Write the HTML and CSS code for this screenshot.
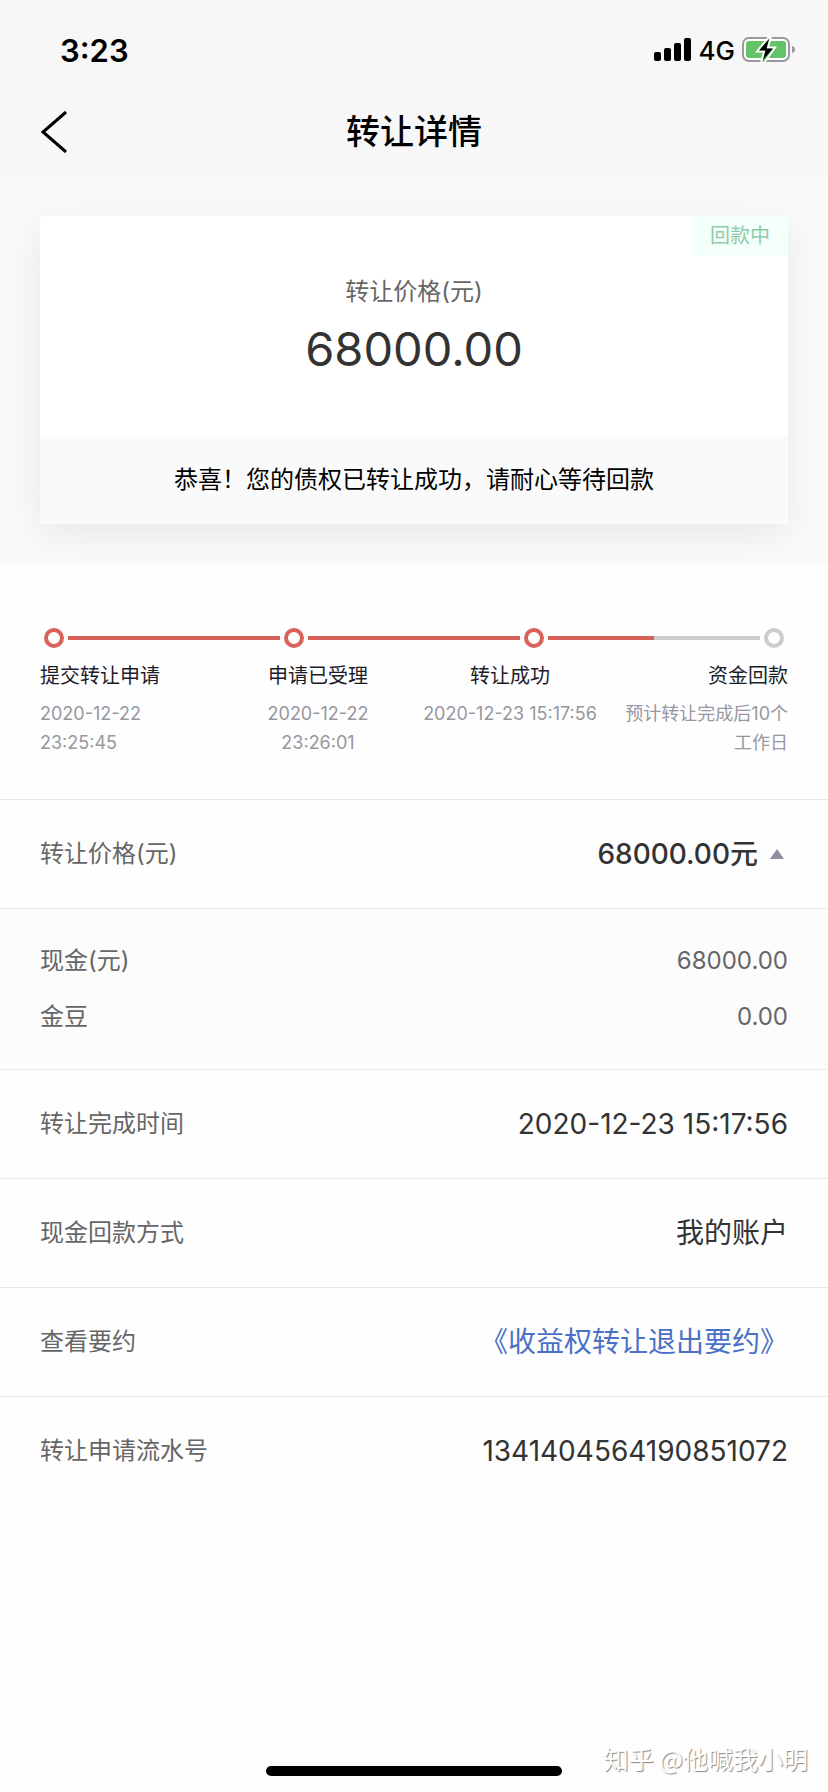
FILE: index.html
```html
<!DOCTYPE html>
<html lang="zh-CN">
  <head>
    <meta charset="UTF-8" />
    <meta name="viewport" content="width=device-width, initial-scale=1.0" />
    <title>转让详情</title>
    <link rel="stylesheet" href="styles.css">
  </head>
  <body>
    <header class="header">
      <div class="status">
        <div class="time">3:23</div>
        <div class="statusIcons">
          <svg class="signal" width="38" height="24" viewBox="0 0 38 24">
            <rect x="0" y="14" width="7" height="9" rx="2" />
            <rect x="10" y="10" width="7" height="13" rx="2" />
            <rect x="20" y="5" width="7" height="18" rx="2" />
            <rect x="30" y="0" width="7" height="23" rx="2" />
          </svg>
          <span class="network">4G</span>
          <svg class="battery" width="54" height="26" viewBox="0 0 54 26">
            <rect x="1" y="1" width="46" height="23" rx="6" fill="#fff" stroke="#9a989c" stroke-width="2" />
            <rect x="4" y="4" width="40" height="17" rx="3" fill="#62c466" />
            <path d="M50 9 Q53 10 53 12.500 Q53 15 50 16 Z" fill="#9a989c" />
            <path d="M27 0 L15 14.500 H22 L19 26 H22 L33 10.500 H26 L29 0 Z" fill="#62c466" stroke="#fff" stroke-width="2" />
            <path d="M27 2 L17 13.500 H23.500 L21 23 L31 11.500 H24.500 Z" fill="#000" />
          </svg>
        </div>
      </div>
      <div class="nav">
        <button class="back" type="button" aria-label="返回">
          <svg width="26" height="42" viewBox="0 0 26 42">
            <path d="M25 1 L2 21 L25 41" fill="none" stroke="#000" stroke-width="3" />
          </svg>
        </button>
        <h1 class="title">转让详情</h1>
      </div>
    </header>

    <main>
      <section class="hero">
        <div class="card">
          <span class="badge">回款中</span>
          <div class="cardTop">
            <div class="cardLabel">转让价格(元)</div>
            <div class="cardPrice">68000.00</div>
          </div>
          <div class="cardMsg">恭喜！您的债权已转让成功，请耐心等待回款</div>
        </div>
      </section>

      <section class="steps">
        <div class="track">
          <span class="dot"></span>
          <span class="line"></span>
          <span class="dot"></span>
          <span class="line"></span>
          <span class="dot"></span>
          <span class="line lineHalf"></span>
          <span class="dot dotOff"></span>
        </div>
        <ol class="stepList">
          <li>
            <div class="stepName">提交转让申请</div>
            <div class="stepDate">2020-12-22<br />23:25:45</div>
          </li>
          <li>
            <div class="stepName">申请已受理</div>
            <div class="stepDate">2020-12-22<br />23:26:01</div>
          </li>
          <li>
            <div class="stepName">转让成功</div>
            <div class="stepDate">2020-12-23 15:17:56</div>
          </li>
          <li>
            <div class="stepName">资金回款</div>
            <div class="stepDate">预计转让完成后10个<br />工作日</div>
          </li>
        </ol>
      </section>

      <section class="list">
        <div class="row">
          <span class="label">转让价格(元)</span>
          <button class="value amount" type="button" aria-expanded="true">
            68000.00元
            <svg width="14" height="10" viewBox="0 0 14 10">
              <path d="M7 0 L14 10 H0 Z" fill="#8f8f9f" />
            </svg>
          </button>
        </div>
        <div class="detail">
          <div class="detailRow"><span>现金(元)</span><span>68000.00</span></div>
          <div class="detailRow"><span>金豆</span><span>0.00</span></div>
        </div>
        <div class="row">
          <span class="label">转让完成时间</span>
          <span class="value">2020-12-23 15:17:56</span>
        </div>
        <div class="row">
          <span class="label">现金回款方式</span>
          <span class="value">我的账户</span>
        </div>
        <div class="row">
          <span class="label">查看要约</span>
          <a class="value link" href="#">《收益权转让退出要约》</a>
        </div>
        <div class="row">
          <span class="label">转让申请流水号</span>
          <span class="value">1341404564190851072</span>
        </div>
      </section>
    </main>

    <div class="homeBar"></div>
    <div class="watermark">知乎 @他喊我小明</div>
  </body>
</html>
```
FILE: styles.css
```css
* {
  box-sizing: border-box;
}
body {
  display: flex;
  flex-direction: column;
  position: relative;
  min-height: 100vh;
  margin: 0;
  background-color: #fefefe;
  color: #333;
  font-family: Inter, "Noto Sans CJK SC", sans-serif;
}
button {
  border: none;
  background: none;
  padding: 0;
  font-family: inherit;
}

/* header */
.header {
  background-color: #f7f7f7;
  color: #000;
}
.status {
  display: flex;
  align-items: center;
  justify-content: space-between;
  height: 88px;
  padding: 12px 32px 0 60px;
}
.time {
  font-size: 31px;
  font-weight: 600;
}
.statusIcons {
  display: flex;
  align-items: center;
  gap: 7px;
}
.network {
  font-size: 26px;
  font-weight: 500;
}
.nav {
  display: grid;
  grid-template-columns: 1fr auto 1fr;
  align-items: center;
  height: 88px;
  padding: 0 41px;
}
.back {
  display: flex;
  justify-self: start;
}
.title {
  margin: 0;
  font-size: 34px;
  font-weight: 500;
  line-height: 40px;
}

/* price card */
.hero {
  padding: 40px;
  background-color: #fafafa;
  overflow: hidden;
}
.card {
  position: relative;
  border-radius: 4px 4px 0 0;
  background-color: #fff;
  box-shadow: 0 10px 40px rgba(0, 0, 0, 0.08);
}
.badge {
  position: absolute;
  top: 0;
  right: 0;
  padding: 0 18px;
  background-color: #f5fffa;
  color: #8fcbad;
  font-size: 20px;
  line-height: 40px;
}
.cardTop {
  height: 220px;
  padding-top: 58px;
  text-align: center;
}
.cardLabel {
  color: #666;
  font-size: 24px;
  line-height: 36px;
}
.cardPrice {
  font-size: 47px;
  line-height: 78px;
}
.cardMsg {
  background-color: #fafafa;
  color: #000;
  font-size: 24px;
  line-height: 88px;
  text-align: center;
}

/* progress */
.steps {
  padding: 64px 40px 42px;
}
.track {
  display: flex;
  align-items: center;
  padding: 0 4px;
}
.dot {
  width: 20px;
  height: 20px;
  border: 4px solid #d6625a;
  border-radius: 50%;
}
.dotOff {
  border-color: #ccc;
}
.line {
  flex: 1;
  height: 4px;
  margin: 0 4px;
  background-color: #d6625a;
}
.lineHalf {
  background: linear-gradient(to right, #d6625a 50%, #ccc 50%);
}
.stepList {
  display: grid;
  grid-template-columns: 49fr 41fr 55fr 42fr;
  margin: 10px 0 0;
  padding: 0;
  list-style: none;
  text-align: center;
  white-space: nowrap;
}
.stepList li:first-child {
  text-align: left;
}
.stepList li:last-child {
  text-align: right;
}
.stepName {
  margin-bottom: 5px;
  color: #1c1c2b;
  font-size: 20px;
  line-height: 36px;
}
.stepDate {
  color: #97979f;
  font-size: 18px;
  line-height: 29px;
}

/* info rows */
.row {
  display: flex;
  align-items: center;
  justify-content: space-between;
  height: 109px;
  padding: 0 40px;
  border-top: 1px solid #e9e9e9;
}
.label {
  color: #666;
  font-size: 24px;
  line-height: 36px;
}
.value {
  color: #333;
  font-size: 28px;
  line-height: 36px;
}
.amount {
  display: flex;
  align-items: center;
  gap: 12px;
  padding-right: 4px;
  font-weight: 500;
}
.link {
  color: #4a70c8;
  text-decoration: none;
}
.detail {
  padding: 24px 40px;
  border-top: 1px solid #e9e9e9;
  background-color: #fcfcfc;
  color: #666;
  font-size: 24px;
}
.detailRow {
  display: flex;
  justify-content: space-between;
  line-height: 56px;
}

.homeBar {
  width: 296px;
  height: 10px;
  margin: auto auto 16px;
  border-radius: 5px;
  background-color: #000;
}
.watermark {
  position: absolute;
  right: 20px;
  bottom: 16px;
  color: #fff;
  font-family: "Noto Sans CJK SC", sans-serif;
  font-size: 25px;
  text-shadow: 1px 1px 1px #888;
}
```
